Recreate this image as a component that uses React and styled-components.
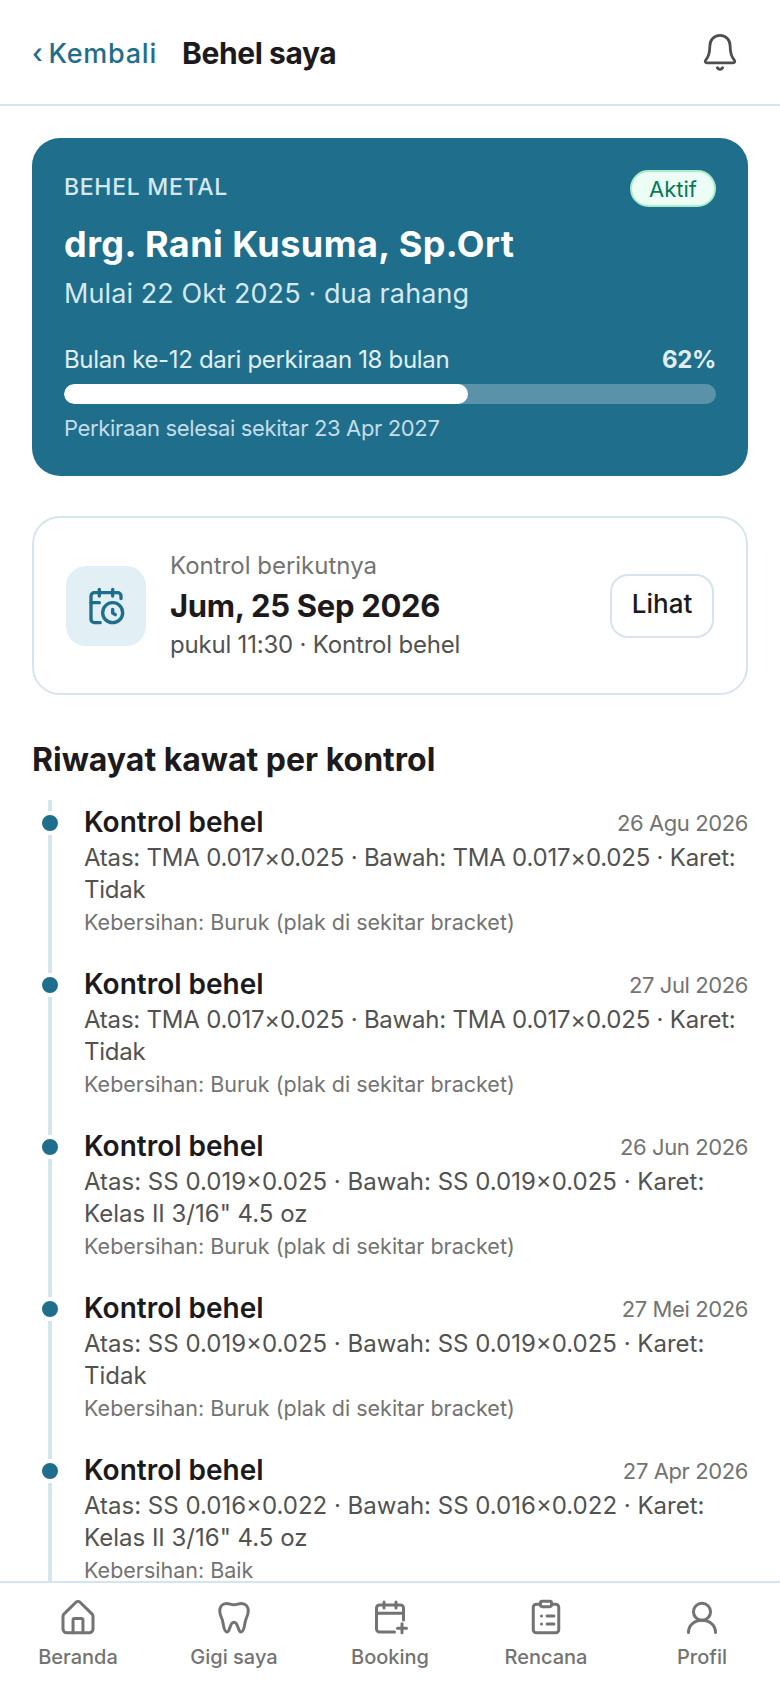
import styled, { createGlobalStyle } from "styled-components";
import { CalendarClock } from "lucide-react";

const GlobalStyle = createGlobalStyle`
  html, body {
    margin: 0;
    padding: 0;
    background: #fff;
  }
  * {
    box-sizing: border-box;
  }
  body {
    font-family: "Inter", "Noto Sans", sans-serif;
    color: #1c1a1c;
  }
`;

const Page = styled.div`
  width: 780px;
  height: 1688px;
  display: flex;
  flex-direction: column;
  overflow: hidden;
  background: #fff;
`;

const Header = styled.header`
  height: 106px;
  flex: none;
  display: flex;
  align-items: center;
  padding: 2px 39px 0 32px;
  border-bottom: 2px solid #d5e5ec;
`;

const BackLink = styled.a`
  font-size: 27px;
  font-weight: 500;
  color: #1f6e8c;
  letter-spacing: 0.75px;
  word-spacing: -3px;
  margin-right: 25px;
`;

const Title = styled.h1`
  flex: 1;
  margin: 0;
  font-size: 30px;
  font-weight: 700;
  letter-spacing: -0.4px;
`;

const Main = styled.main`
  flex: 1;
  min-height: 0;
  overflow: hidden;
  padding: 32px 32px 0;
`;

const HeroCard = styled.section`
  height: 338px;
  border-radius: 28px;
  background: #1f6e8c;
  padding: 32px 32px 0;
  color: #fff;
`;

const HeroTop = styled.div`
  display: flex;
  justify-content: space-between;
  align-items: center;
  height: 37px;
`;

const Eyebrow = styled.span`
  font-size: 23px;
  font-weight: 500;
  letter-spacing: 0.7px;
  color: #d5e8f0;
  margin-top: -4px;
`;

const Badge = styled.span`
  width: 86px;
  height: 37px;
  display: flex;
  align-items: center;
  justify-content: center;
  border-radius: 19px;
  border: 2px solid #a9ecca;
  background: #ecfdf5;
  color: #047857;
  font-size: 22px;
  font-weight: 400;
`;

const DoctorName = styled.h2`
  margin: 14px 0 0;
  font-size: 36px;
  line-height: 46px;
  font-weight: 700;
  letter-spacing: 0.45px;
`;

const HeroSub = styled.p`
  margin: 7px 0 0;
  font-size: 27px;
  line-height: 40px;
  letter-spacing: 0.1px;
  color: #d5e8f0;
`;

const ProgressLabels = styled.div`
  display: flex;
  justify-content: space-between;
  margin-top: 30px;
  font-size: 24px;
  line-height: 32px;
  letter-spacing: -0.33px;
  color: #e0eef3;
`;

const Percent = styled.span`
  font-weight: 700;
`;

const Track = styled.div`
  height: 20px;
  margin-top: 8px;
  border-radius: 10px;
  background: #5a92a9;
  overflow: hidden;
`;

const Fill = styled.div`
  height: 100%;
  border-radius: 10px;
  background: #fff;
`;

const HeroNote = styled.p`
  margin: 10px 0 0;
  font-size: 22px;
  line-height: 28px;
  letter-spacing: -0.35px;
  color: #c4dde7;
`;

const NextCard = styled.section`
  margin-top: 40px;
  height: 179px;
  display: flex;
  align-items: center;
  border: 2px solid #d5e5ec;
  border-radius: 28px;
  padding: 0 32px;
`;

const IconBox = styled.div`
  width: 80px;
  height: 80px;
  flex: none;
  display: flex;
  align-items: center;
  justify-content: center;
  border-radius: 20px;
  background: #e2f0f6;
  color: #1f6e8c;
`;

const NextText = styled.div`
  flex: 1;
  margin-left: 24px;
`;

const NextLabel = styled.div`
  font-size: 24px;
  line-height: 32px;
  color: #737373;
`;

const NextDate = styled.div`
  font-size: 31px;
  line-height: 44px;
  font-weight: 700;
  letter-spacing: -0.3px;
  margin-top: 2px;
`;

const NextInfo = styled.div`
  font-size: 24px;
  line-height: 34px;
  letter-spacing: -0.2px;
  color: #525252;
`;

const ViewButton = styled.button`
  width: 104px;
  height: 64px;
  border: 2px solid #d5e5ec;
  border-radius: 18px;
  background: #fff;
  padding: 0 0 4px;
  font-family: inherit;
  font-size: 26px;
  font-weight: 500;
  color: #1c1a1c;
`;

const SectionTitle = styled.h3`
  margin: 43px 0 0;
  font-size: 32px;
  line-height: 44px;
  font-weight: 700;
`;

const Timeline = styled.ul`
  position: relative;
  list-style: none;
  margin: 18px 0 0;
  padding: 4px 0 0 52px;

  &::before {
    content: "";
    position: absolute;
    left: 16px;
    top: 0;
    bottom: 0;
    width: 4px;
    background: #d5e5ec;
  }
`;

const Entry = styled.li`
  position: relative;
  height: 162px;
`;

const Dot = styled.span`
  position: absolute;
  left: -46px;
  top: 7px;
  width: 24px;
  height: 24px;
  border-radius: 50%;
  border: 4px solid #fff;
  background: #1f6e8c;
`;

const EntryHead = styled.div`
  display: flex;
  justify-content: space-between;
  align-items: center;
  height: 36px;
`;

const EntryTitle = styled.span`
  font-size: 28px;
  font-weight: 600;
`;

const EntryDate = styled.span`
  font-size: 22px;
  letter-spacing: -0.4px;
  margin-top: 2px;
  color: #737373;
`;

const EntryBody = styled.p`
  margin: 2px 0 0;
  font-size: 24px;
  line-height: 32px;
  letter-spacing: ${({ $spacing }) => $spacing}px;
  color: #525252;
`;

const EntryNote = styled.p`
  margin: 2px 0 0;
  font-size: 21.5px;
  line-height: 28px;
  color: #737373;
`;

const BottomNav = styled.nav`
  flex: none;
  height: 107px;
  display: grid;
  grid-template-columns: repeat(5, 1fr);
  border-top: 2px solid #d5e5ec;
  background: #fff;
  padding-top: 16px;
`;

const NavItem = styled.a`
  display: flex;
  flex-direction: column;
  align-items: center;
  gap: 8px;
  font-size: 20px;
  line-height: 28px;
  font-weight: 500;
  color: #737373;
`;

const Icon = styled.svg`
  fill: none;
  stroke: currentColor;
  stroke-width: 2;
  stroke-linecap: round;
  stroke-linejoin: round;
  display: block;
`;

const BellIcon = styled(Icon)`
  stroke-width: 1.6;
`;

const BellButton = styled.span`
  color: #4f4f4f;
  display: flex;
  margin-top: -2px;
`;

const entries = [
  { date: "26 Agu 2026", spacing: -0.22, body: "Atas: TMA 0.017×0.025 · Bawah: TMA 0.017×0.025 · Karet: Tidak", note: "Kebersihan: Buruk (plak di sekitar bracket)" },
  { date: "27 Jul 2026", spacing: -0.22, body: "Atas: TMA 0.017×0.025 · Bawah: TMA 0.017×0.025 · Karet: Tidak", note: "Kebersihan: Buruk (plak di sekitar bracket)" },
  { date: "26 Jun 2026", spacing: 0, body: 'Atas: SS 0.019×0.025 · Bawah: SS 0.019×0.025 · Karet: Kelas II 3/16" 4.5 oz', note: "Kebersihan: Buruk (plak di sekitar bracket)" },
  { date: "27 Mei 2026", spacing: 0, body: "Atas: SS 0.019×0.025 · Bawah: SS 0.019×0.025 · Karet: Tidak", note: "Kebersihan: Buruk (plak di sekitar bracket)" },
  { date: "27 Apr 2026", spacing: 0, body: 'Atas: SS 0.016×0.022 · Bawah: SS 0.016×0.022 · Karet: Kelas II 3/16" 4.5 oz', note: "Kebersihan: Baik" },
];

const HomeIcon = () => (
  <Icon width="36" height="36" viewBox="0 0 24 24">
    <path d="M2 11.500a2 2 0 0 1 .6-1.400l8-7.900a2 2 0 0 1 2.800 0l8 7.900a2 2 0 0 1 .6 1.400v8.500a2.500 2.500 0 0 1-2.500 2.500H4.500A2.500 2.500 0 0 1 2 20z" />
    <path d="M8.700 22.500V14a1 1 0 0 1 1-1h4.600a1 1 0 0 1 1 1v8.500" />
  </Icon>
);

const ToothIcon = () => (
  <Icon width="36" height="36" viewBox="0 0 24 24">
    <path d="M7 3c2 0 3 .9 5 .9s3-.9 5-.9c2.900 0 4.500 2.300 4.500 5 0 3-1.500 4.500-2 7-.4 2-.8 7-2.800 7-2.200 0-1.700-6.500-4.700-6.500S9.500 22 7.300 22c-2 0-2.400-5-2.800-7-.5-2.500-2-4-2-7 0-2.700 1.600-5 4.500-5z" />
  </Icon>
);

const BookingIcon = () => (
  <Icon width="36" height="36" viewBox="0 0 24 24">
    <path d="M21 14V6a2 2 0 0 0-2-2H5a2 2 0 0 0-2 2v14a2 2 0 0 0 2 2h10" />
    <path d="M3 9.500h18M8 2v4M16 2v4M20 16.500v6M17 19.500h6" />
  </Icon>
);

const PlanIcon = () => (
  <Icon width="36" height="36" viewBox="0 0 24 24">
    <rect x="8.300" y="1.500" width="7.400" height="3.600" rx="1.200" />
    <path d="M8.300 3.500H5.500a2 2 0 0 0-2 2V20.500a2 2 0 0 0 2 2h13a2 2 0 0 0 2-2V5.500a2 2 0 0 0-2-2h-2.800" />
    <path d="M12.700 11.300h4.600M12.700 16.700h4.600M9 11.300h.01M9 16.700h.01" />
  </Icon>
);

const UserIcon = () => (
  <Icon width="36" height="36" viewBox="0 0 24 24">
    <circle cx="12" cy="8.500" r="5.700" />
    <path d="M3 22.300c0-5 4-8.100 9-8.100s9 3.100 9 8.100" />
  </Icon>
);

const navItems = [
  { label: "Beranda", icon: <HomeIcon /> },
  { label: "Gigi saya", icon: <ToothIcon /> },
  { label: "Booking", icon: <BookingIcon /> },
  { label: "Rencana", icon: <PlanIcon /> },
  { label: "Profil", icon: <UserIcon /> },
];

export default function App() {
  return (
    <Page>
      <GlobalStyle />
      <Header>
        <BackLink>‹ Kembali</BackLink>
        <Title>Behel saya</Title>
        <BellButton>
          <BellIcon width="42" height="42" viewBox="0 0 24 24">
            <path d="M12 2.500c-3.500 0-5.800 2.700-5.800 6 0 4.500-1 6.500-2.400 8.200-.5.700-.2 1.500.7 1.500h15c.9 0 1.200-.8.700-1.500-1.400-1.700-2.400-3.700-2.400-8.200 0-3.300-2.300-6-5.800-6z" />
            <path d="M10.500 21a1.700 1.700 0 0 0 3 0" />
          </BellIcon>
        </BellButton>
      </Header>
      <Main>
        <HeroCard>
          <HeroTop>
            <Eyebrow>BEHEL METAL</Eyebrow>
            <Badge>Aktif</Badge>
          </HeroTop>
          <DoctorName>drg. Rani Kusuma, Sp.Ort</DoctorName>
          <HeroSub>Mulai 22 Okt 2025 · dua rahang</HeroSub>
          <ProgressLabels>
            <span>Bulan ke-12 dari perkiraan 18 bulan</span>
            <Percent>62%</Percent>
          </ProgressLabels>
          <Track>
            <Fill style={{ width: "62%" }} />
          </Track>
          <HeroNote>Perkiraan selesai sekitar 23 Apr 2027</HeroNote>
        </HeroCard>

        <NextCard>
          <IconBox>
            <CalendarClock size={40} strokeWidth={2} />
          </IconBox>
          <NextText>
            <NextLabel>Kontrol berikutnya</NextLabel>
            <NextDate>Jum, 25 Sep 2026</NextDate>
            <NextInfo>pukul 11:30 · Kontrol behel</NextInfo>
          </NextText>
          <ViewButton>Lihat</ViewButton>
        </NextCard>

        <SectionTitle>Riwayat kawat per kontrol</SectionTitle>
        <Timeline>
          {entries.map((entry) => (
            <Entry key={entry.date}>
              <Dot />
              <EntryHead>
                <EntryTitle>Kontrol behel</EntryTitle>
                <EntryDate>{entry.date}</EntryDate>
              </EntryHead>
              <EntryBody $spacing={entry.spacing}>{entry.body}</EntryBody>
              <EntryNote>{entry.note}</EntryNote>
            </Entry>
          ))}
        </Timeline>
      </Main>
      <BottomNav>
        {navItems.map((item) => (
          <NavItem key={item.label}>
            {item.icon}
            {item.label}
          </NavItem>
        ))}
      </BottomNav>
    </Page>
  );
}
